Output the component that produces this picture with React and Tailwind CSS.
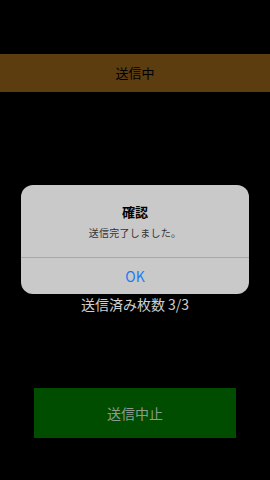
export default function App() {
  return (
    <div
      className="relative h-[480px] w-[270px] overflow-hidden bg-black"
      style={{ fontFamily: '"Noto Sans CJK JP", "Noto Sans", sans-serif' }}
    >
      <div className="flex flex-col pt-[54px]">
        <div className="flex h-[38px] items-center justify-center bg-[#5c3d10] text-[13px] text-black">
          送信中
        </div>
        <div className="mt-[202px] flex h-[20px] items-center justify-center text-[14px] text-[#cfcfcf]">
          送信済み枚数 3/3
        </div>
        <div className="mx-auto mt-[74px] flex h-[50px] w-[202px] items-center justify-center bg-[#004d00] text-[14px] text-[#8c9c8c]">
          送信中止
        </div>
      </div>

      {/* alert */}
      <div className="absolute left-[21px] top-[185px] w-[228px] overflow-hidden rounded-[12px] bg-[#c9c9c9]">
        <div className="flex flex-col items-center pt-[17px] pb-[17px]">
          <div className="text-[13px] font-bold leading-[20px] text-black">確認</div>
          <div className="mt-[4px] text-[10px] leading-[14px] tracking-[0.3px] text-[#333]">
            送信完了しました。
          </div>
        </div>
        <div className="h-px bg-[#a8a8a8]" />
        <div className="flex h-[36px] items-center justify-center text-[14px] text-[#1a7cf5]">
          OK
        </div>
      </div>
    </div>
  );
}
